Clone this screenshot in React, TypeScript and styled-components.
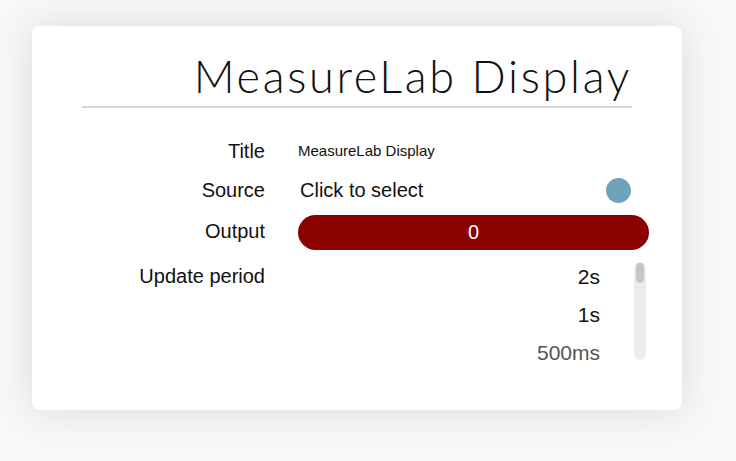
import React from 'react';
import styled, { createGlobalStyle } from 'styled-components';

const GlobalStyle = createGlobalStyle`
  html, body {
    margin: 0;
    padding: 0;
    background: #ffffff;
    font-family: "Liberation Sans", Arial, sans-serif;
  }
`;

const Page = styled.div`
  width: 736px;
  height: 461px;
  padding: 26px 0 0 32px;
  box-sizing: border-box;
  background: #f8f8f8;
`;

const Card = styled.div`
  width: 650px;
  height: 384px;
  box-sizing: border-box;
  background: #ffffff;
  border-radius: 8px;
  box-shadow: 0 0 40px rgba(0, 0, 0, 0.12);
  padding: 24px 33px 0 50px;
`;

const Heading = styled.h1`
  width: 550px;
  margin: 0;
  padding-bottom: 4px;
  border-bottom: 2px solid #d6d6d6;
  text-align: right;
  font-family: "Lato", sans-serif;
  font-weight: 300;
  font-size: 45px;
  letter-spacing: 2.7px;
  line-height: 52px;
  color: #111;
`;

const Rows = styled.div`
  display: grid;
  grid-template-columns: 183px 351px;
  grid-template-rows: 34px 44px auto auto;
  column-gap: 33px;
  margin-top: 26px;
  align-items: center;
`;

const Label = styled.div<{ $top?: boolean }>`
  text-align: right;
  font-size: 20px;
  color: #111;
  line-height: 36px;
  align-self: ${p => (p.$top ? 'start' : 'center')};
  margin-top: ${p => (p.$top ? '8px' : '0')};
`;

const TitleValue = styled.div`
  font-size: 15px;
  color: #111;
  line-height: 34px;
`;

const SourceValue = styled.div`
  display: flex;
  align-items: center;
  justify-content: space-between;
  padding: 0 18px 0 2px;
  font-size: 20px;
  color: #111;
`;

const Dot = styled.span`
  width: 25px;
  height: 25px;
  border-radius: 50%;
  background: #6fa3bb;
`;

const OutputBar = styled.div`
  height: 35px;
  border-radius: 18px;
  background: #8b0000;
  color: #fff;
  font-size: 20px;
  line-height: 35px;
  text-align: center;
  margin-top: 3px;
`;

const PeriodBox = styled.div`
  display: flex;
  align-items: flex-start;
  margin-top: 8px;
`;

const PeriodList = styled.div`
  flex: 1;
`;

const PeriodItem = styled.div<{ $dim?: boolean }>`
  height: 38px;
  line-height: 38px;
  text-align: right;
  padding-right: 34px;
  font-size: 21px;
  color: ${p => (p.$dim ? '#555' : '#111')};
`;

const ScrollTrack = styled.div`
  width: 12px;
  height: 98px;
  margin: 4px 3px 0 0;
  padding: 1px 2px;
  box-sizing: border-box;
  border-radius: 6px;
  background: #ececec;
`;

const ScrollThumb = styled.div`
  height: 20px;
  border-radius: 4px;
  background: #c6c6c6;
`;

const periods = ['2s', '1s', '500ms'];

const App: React.FC = () => (
  <Page>
    <GlobalStyle />
    <Card>
      <Heading>MeasureLab Display</Heading>
      <Rows>
        <Label>Title</Label>
        <TitleValue>MeasureLab Display</TitleValue>
        <Label>Source</Label>
        <SourceValue>
          Click to select
          <Dot />
        </SourceValue>
        <Label>Output</Label>
        <OutputBar>0</OutputBar>
        <Label $top>Update period</Label>
        <PeriodBox>
          <PeriodList>
            {periods.map((p, i) => (
              <PeriodItem key={p} $dim={i >= 2}>{p}</PeriodItem>
            ))}
          </PeriodList>
          <ScrollTrack>
            <ScrollThumb />
          </ScrollTrack>
        </PeriodBox>
      </Rows>
    </Card>
  </Page>
);

export default App;
